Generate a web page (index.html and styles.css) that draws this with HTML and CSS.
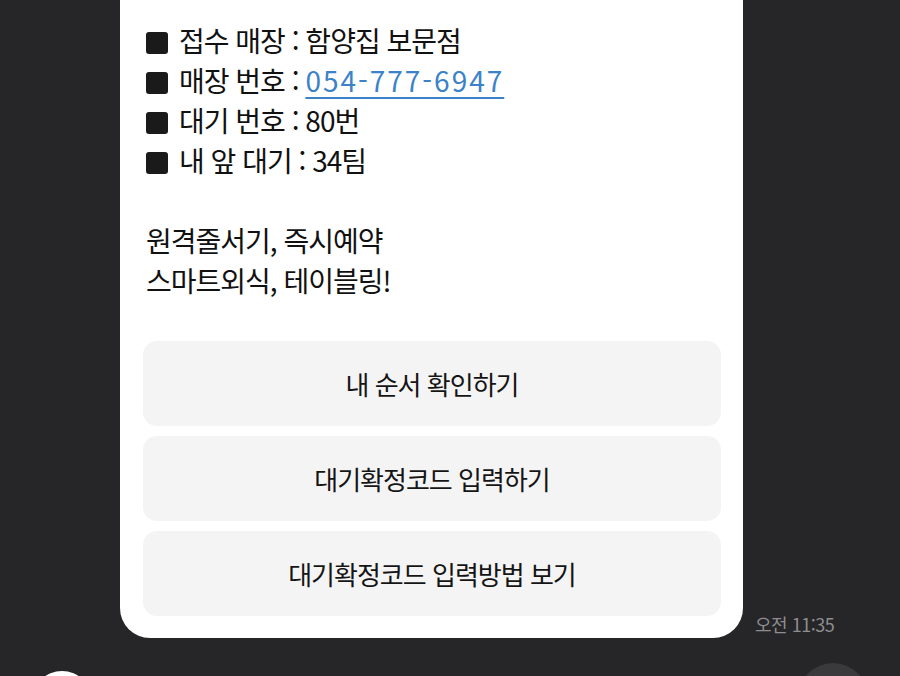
FILE: index.html
```html
<!DOCTYPE html>
<html lang="ko">

<head>
    <meta charset="utf-8" />
    <title>테이블링 알림</title>
    <meta name="viewport" content="width=device-width, initial-scale=1.0">
    <link rel="stylesheet" href="styles.css">
</head>

<body>
    <div class="chat">
        <!-- Message bubble -->
        <div class="msg-row">
            <div class="card">
                <div class="info">
                    <div class="info-line"><span class="bullet"></span>접수 매장 : 함양집 보문점</div>
                    <div class="info-line"><span class="bullet"></span>매장 번호 : <a class="phone" href="#">054-777-6947</a></div>
                    <div class="info-line"><span class="bullet"></span>대기 번호 : 80번</div>
                    <div class="info-line"><span class="bullet"></span>내 앞 대기 : 34팀</div>
                    <div class="info-line blank"></div>
                    <div class="info-line">원격줄서기, 즉시예약</div>
                    <div class="info-line">스마트외식, 테이블링!</div>
                </div>
                <!-- Buttons -->
                <div class="buttons">
                    <div class="btn">내 순서 확인하기</div>
                    <div class="btn">대기확정코드 입력하기</div>
                    <div class="btn">대기확정코드 입력방법 보기</div>
                </div>
            </div>
            <span class="time">오전 11:35</span>
        </div>
        <!-- Next message (cut off) -->
        <div class="next-row">
            <span class="avatar"></span>
            <span class="bubble-peek"></span>
        </div>
    </div>
</body>

</html>
```

FILE: styles.css
```css
* {
    padding: 0;
    margin: 0;
    box-sizing: border-box;
}

html,
body {
    height: 676px;
    overflow: hidden;
}

body {
    background-color: #262628;
    font-family: 'Noto Sans CJK KR', 'Noto Sans', sans-serif;
    color: #111;
}

.chat {
    width: 900px;
}

.msg-row {
    display: flex;
    align-items: flex-end;
    padding-left: 120px;
}

.card {
    width: 623px;
    background-color: #fff;
    border-radius: 0 0 30px 30px;
    padding: 20px 22px 22px 23px;
}

.info {
    font-size: 28px;
    line-height: 40px;
    letter-spacing: -1px;
    padding-left: 3px;
}

.info-line {
    height: 40px;
    white-space: nowrap;
}

.bullet {
    display: inline-block;
    width: 22px;
    height: 22px;
    background-color: #1a1a1a;
    border-radius: 3px;
    margin-right: 11px;
    vertical-align: -2px;
}

.phone {
    color: #3b82c9;
    text-decoration: underline;
    text-decoration-thickness: 2px;
    text-underline-offset: 5px;
    letter-spacing: 2px;
}

.buttons {
    margin-top: 41px;
    display: flex;
    flex-direction: column;
    gap: 10px;
}

.btn {
    height: 85px;
    background-color: #f4f4f4;
    border-radius: 14px;
    display: flex;
    align-items: center;
    justify-content: center;
    font-size: 26px;
    letter-spacing: -1px;
    color: #151515;
}

.time {
    margin-left: 12px;
    margin-bottom: 1px;
    font-size: 18px;
    color: #8e8e90;
    letter-spacing: -0.5px;
    white-space: nowrap;
}

.next-row {
    display: flex;
    justify-content: space-between;
    padding: 25px 32px 0 32px;
}

.avatar {
    margin-top: 8px;
    width: 60px;
    height: 60px;
    border-radius: 50%;
    background-color: #fff;
}

.bubble-peek {
    width: 70px;
    height: 70px;
    border-radius: 50%;
    background-color: #3a3a3c;
}
```
